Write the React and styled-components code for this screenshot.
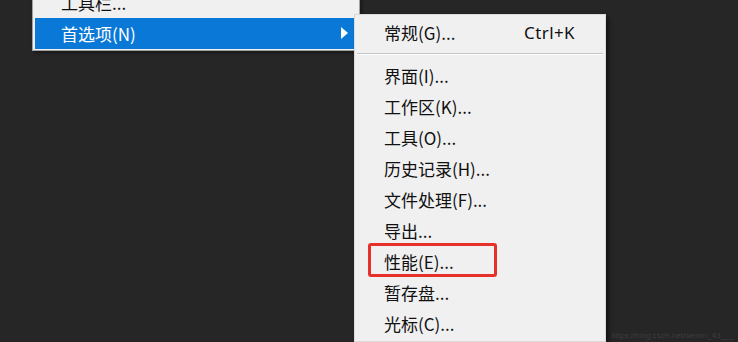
import React from 'react'
import styled, { createGlobalStyle } from 'styled-components'

const GlobalStyle = createGlobalStyle`
  html, body {
    margin: 0;
    padding: 0;
    background: #262626;
  }
  body {
    width: 738px;
    height: 342px;
    overflow: hidden;
    font-family: "Noto Sans CJK SC", "Noto Sans", "Liberation Sans", sans-serif;
  }
`

const submenuItems = [
  { label: '界面(I)...' },
  { label: '工作区(K)...' },
  { label: '工具(O)...' },
  { label: '历史记录(H)...' },
  { label: '文件处理(F)...' },
  { label: '导出...' },
  { label: '性能(E)...', marked: true },
  { label: '暂存盘...' },
  { label: '光标(C)...' },
]

const App = () => {
  return (
    <Screen>
      <GlobalStyle />
      <Menu>
        <Item>工具栏...</Item>
        <Item active>
          首选项(N)
          <Arrow />
          <Submenu>
            <SubItem>
              常规(G)...
              <Shortcut>Ctrl+K</Shortcut>
            </SubItem>
            <Separator />
            {submenuItems.map((it) => (
              <SubItem key={it.label}>
                {it.label}
                {it.marked && <Mark />}
              </SubItem>
            ))}
          </Submenu>
        </Item>
      </Menu>
      <Watermark>https://blog.csdn.net/weixin_43___</Watermark>
    </Screen>
  )
}

export default App

const Screen = styled.div`
  position: relative;
  width: 738px;
  height: 342px;
  background: #262626;
  overflow: hidden;
`

const Menu = styled.div`
  margin-left: 32px;
  margin-top: -16px;
  width: 322px;
  padding: 2px 2px 1px 2px;
  background: #f0f0f0;
  border: 1px solid #a0a0a0;
  box-shadow: 2px 2px 3px rgba(0, 0, 0, 0.35);
`

const Item = styled.div`
  position: relative;
  display: flex;
  align-items: center;
  height: 31px;
  padding-left: 26px;
  font-size: 17px;
  color: ${(p) => (p.active ? '#ffffff' : '#111111')};
  background: ${(p) => (p.active ? '#0a78d7' : 'transparent')};
  white-space: nowrap;
`

const Arrow = styled.span`
  position: absolute;
  right: 9px;
  top: 9px;
  width: 0;
  height: 0;
  border-top: 6px solid transparent;
  border-bottom: 6px solid transparent;
  border-left: 7px solid #ffffff;
`

const Submenu = styled.div`
  position: absolute;
  left: 319px;
  top: -4px;
  width: 246px;
  padding: 2px;
  background: #f0f0f0;
  border: 1px solid #dadada;
  box-shadow: 3px 3px 4px rgba(0, 0, 0, 0.45);
  color: #111111;
  z-index: 2;
`

const SubItem = styled.div`
  position: relative;
  display: flex;
  align-items: center;
  height: 31px;
  padding: 0 28px 0 27px;
  font-size: 17px;
  line-height: 1;
  white-space: nowrap;
`

const Shortcut = styled.span`
  margin-left: auto;
  font-family: "Noto Sans", "Liberation Sans", sans-serif;
  letter-spacing: 0.4px;
`

const Separator = styled.div`
  height: 12px;
  display: flex;
  align-items: center;

  &::before {
    content: '';
    flex: 1;
    height: 2px;
    background: linear-gradient(#c4c4c4 0 1px, #ffffff 1px 2px);
  }
`

const Mark = styled.span`
  position: absolute;
  left: 11px;
  top: -3px;
  width: 129px;
  height: 34px;
  box-sizing: border-box;
  border: 3px solid #e8302a;
  border-radius: 3px;
`

const Watermark = styled.div`
  position: absolute;
  right: 4px;
  bottom: 2px;
  font-size: 8px;
  color: rgba(255, 255, 255, 0.12);
  font-family: "Liberation Sans", sans-serif;
`
